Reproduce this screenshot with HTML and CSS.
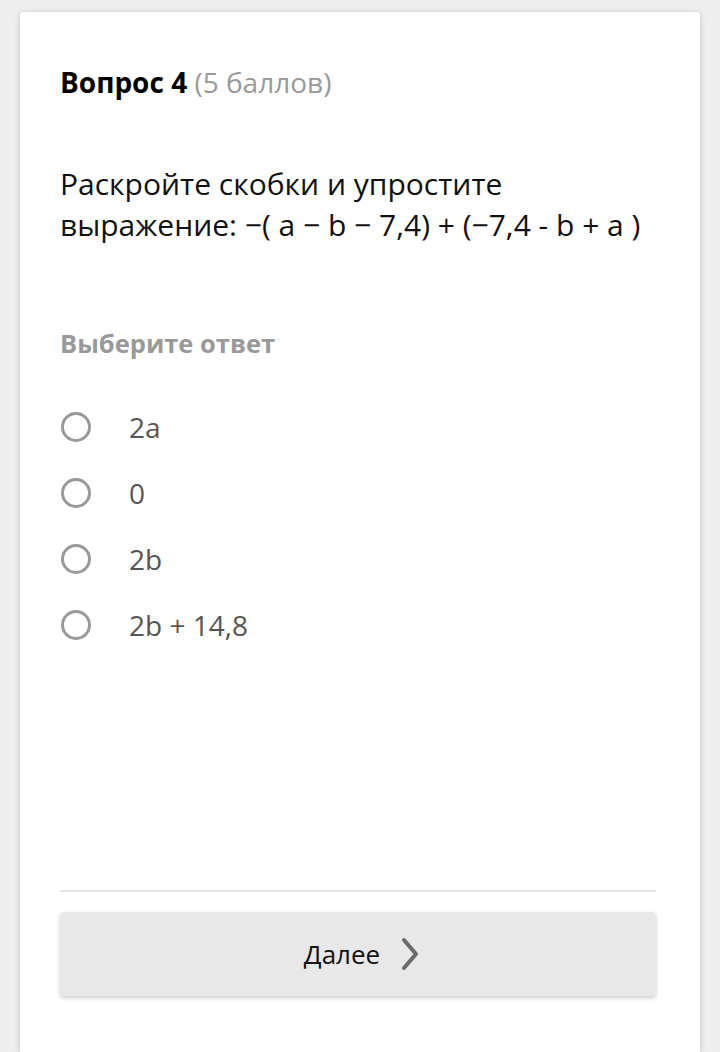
FILE: index.html
```html
<!DOCTYPE html>
<html lang="ru">

<head>
    <meta charset="UTF-8">
    <meta name="viewport" content="width=device-width, initial-scale=1.0">
    <title>Вопрос 4</title>
    <link rel="stylesheet" href="styles.css">
</head>

<body>
    <div class="card">
        <h1 class="question-title">Вопрос 4 <span class="points">(5 баллов)</span></h1>

        <p class="question-text">Раскройте скобки и упростите выражение: −( a − b − 7,4) + (−7,4 - b + a )</p>

        <h2 class="choose">Выберите ответ</h2>

        <ul class="options">
            <li class="option"><span class="radio"></span><span class="label">2a</span></li>
            <li class="option"><span class="radio"></span><span class="label">0</span></li>
            <li class="option"><span class="radio"></span><span class="label">2b</span></li>
            <li class="option"><span class="radio"></span><span class="label">2b + 14,8</span></li>
        </ul>

        <hr class="divider">

        <button class="next-button">
            Далее
            <svg class="chevron" width="20" height="34" viewBox="0 0 20 34">
                <path d="M4 3 L16 17 L4 31" fill="none" stroke="#6b6b6b" stroke-width="4" stroke-linecap="round" stroke-linejoin="round"/>
            </svg>
        </button>
    </div>
</body>

</html>
```

FILE: styles.css
```css
body {
    margin: 0;
    background-color: #eeeeee;
    font-family: "Open Sans", Arial, sans-serif;
    color: #111;
}

.card {
    margin: 12px 20px 0 20px;
    background-color: white;
    border-radius: 4px 4px 0 0;
    box-shadow: 0 1px 6px rgba(0, 0, 0, 0.18);
    padding: 50px 44px 0 40px;
    min-height: calc(100vh - 12px);
    box-sizing: border-box;
}

.question-title {
    margin: 0;
    font-size: 28px;
    font-weight: 700;
    line-height: 40px;
    color: #000;
}

.points {
    font-weight: 400;
    color: #999;
}

.question-text {
    margin: 61px 0 0 0;
    font-size: 30px;
    line-height: 41px;
    color: #111;
}

.choose {
    margin: 80px 0 0 0;
    font-size: 25.5px;
    font-weight: 700;
    line-height: 36px;
    color: #999;
}

.options {
    list-style: none;
    margin: 33px 0 0 0;
    padding: 0;
}

.option {
    display: flex;
    align-items: center;
    height: 66px;
}

.radio {
    width: 24px;
    height: 24px;
    margin-left: 1px;
    border: 3px solid #999;
    border-radius: 50%;
    flex-shrink: 0;
}

.label {
    margin-left: 38px;
    font-size: 28px;
    color: #555;
}

.divider {
    margin: 232px 0 0 0;
    border: none;
    border-top: 2px solid #e3e3e3;
}

.next-button {
    display: flex;
    justify-content: center;
    align-items: center;
    gap: 20px;
    width: 100%;
    height: 84px;
    margin-top: 20px;
    padding: 0 0 0 8px;
    border: none;
    border-radius: 4px;
    background-color: #e8e8e8;
    box-shadow: 0 2px 4px rgba(0, 0, 0, 0.2);
    font-family: "Open Sans", Arial, sans-serif;
    font-size: 26px;
    color: #111;
    cursor: pointer;
}

.chevron {
    display: block;
}
```
